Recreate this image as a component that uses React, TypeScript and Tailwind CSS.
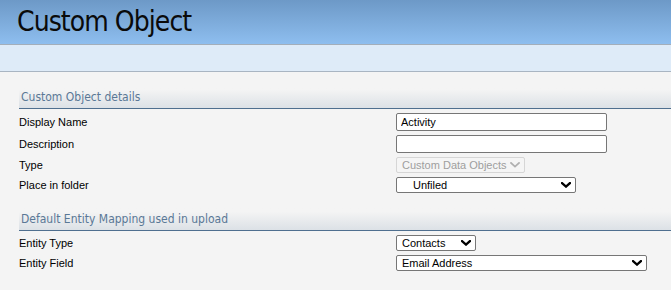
import React from "react";

const Chevron = ({ disabled = false }: { disabled?: boolean }) => (
  <svg
    width="10"
    height="6"
    viewBox="0 0 10 6"
    className="pointer-events-none absolute right-[5px] top-1/2 -translate-y-1/2"
  >
    <path
      d="M1 1 L5 4.6 L9 1"
      fill="none"
      stroke={disabled ? "#b0b0b0" : "#000"}
      strokeWidth={disabled ? 1.8 : 2.3}
      strokeLinecap="square"
    />
  </svg>
);

function Select({
  value,
  width,
  disabled = false,
  indent = false,
}: {
  value: string;
  width: string;
  disabled?: boolean;
  indent?: boolean;
}) {
  return (
    <div className={`relative ${width}`}>
      <select
        disabled={disabled}
        defaultValue={value}
        className={`block h-[16px] w-full appearance-none rounded-[2px] border text-[11px] leading-[14px] outline-none ${
          disabled
            ? "border-[#d6d6d6] bg-[#f5f5f5] pl-[5px] text-[#9e9e9e]"
            : "border-[#767676] bg-white text-black"
        } ${indent ? "pl-[16px]" : disabled ? "" : "pl-[5px]"}`}
        style={{ fontFamily: '"Liberation Sans", Arial, sans-serif' }}
      >
        <option value={value}>{value}</option>
      </select>
      <Chevron disabled={disabled} />
    </div>
  );
}

function TextInput({ value }: { value: string }) {
  return (
    <input
      readOnly
      value={value}
      className="block h-[18px] w-[211px] rounded-[2px] border border-[#767676] bg-white px-[4px] text-[11px] text-black outline-none"
      style={{ fontFamily: '"Liberation Sans", Arial, sans-serif' }}
    />
  );
}

function Row({ label, children }: { label: string; children: React.ReactNode }) {
  return (
    <div className="flex items-center">
      <div className="w-[377px] text-[11px] leading-[14px] text-black">{label}</div>
      {children}
    </div>
  );
}

function SectionHeader({ title }: { title: string }) {
  return (
    <div
      className="flex h-[24px] items-center border-b border-[#4f6f8f] bg-gradient-to-b from-[#f4f4f4] from-20% to-[#dce1e6] pl-[2px] pt-[1px] text-[12px] text-[#5a7896]"
      style={{ fontFamily: '"DejaVu Sans Condensed", "DejaVu Sans", sans-serif', fontStretch: "condensed" }}
    >
      {title}
    </div>
  );
}

export default function App() {
  return (
    <div
      className="h-[290px] w-[671px] overflow-hidden bg-[#f4f4f4]"
      style={{ fontFamily: '"Liberation Sans", Arial, sans-serif' }}
    >
      <div className="flex h-[45px] items-center border-b border-[#a3aeba] bg-gradient-to-b from-[#6d99c7] to-[#8ebeef] pl-[17px]">
        <h1
          className="text-[28px] leading-none tracking-[-0.95px] text-[#0a0a0a]"
          style={{ fontFamily: '"DejaVu Sans Condensed", "DejaVu Sans", sans-serif', fontStretch: "condensed" }}
        >
          Custom Object
        </h1>
      </div>
      <div className="h-[27px] border-b border-[#a9b5c2] bg-[#deebf8]" />
      <div className="pl-[19px] pt-[13px]">
        <SectionHeader title="Custom Object details" />
        <div className="flex flex-col gap-[4px] pt-[4px]">
          <Row label="Display Name">
            <TextInput value="Activity" />
          </Row>
          <Row label="Description">
            <TextInput value="" />
          </Row>
          <Row label="Type">
            <Select value="Custom Data Objects" width="w-[129px]" disabled />
          </Row>
          <Row label="Place in folder">
            <Select value="Unfiled" width="w-[180px]" indent />
          </Row>
        </div>
        <div className="pt-[14px]">
          <SectionHeader title="Default Entity Mapping used in upload" />
        </div>
        <div className="flex flex-col gap-[4px] pt-[4px]">
          <Row label="Entity Type">
            <Select value="Contacts" width="w-[80px]" />
          </Row>
          <Row label="Entity Field">
            <Select value="Email Address" width="w-[251px]" />
          </Row>
        </div>
      </div>
    </div>
  );
}
